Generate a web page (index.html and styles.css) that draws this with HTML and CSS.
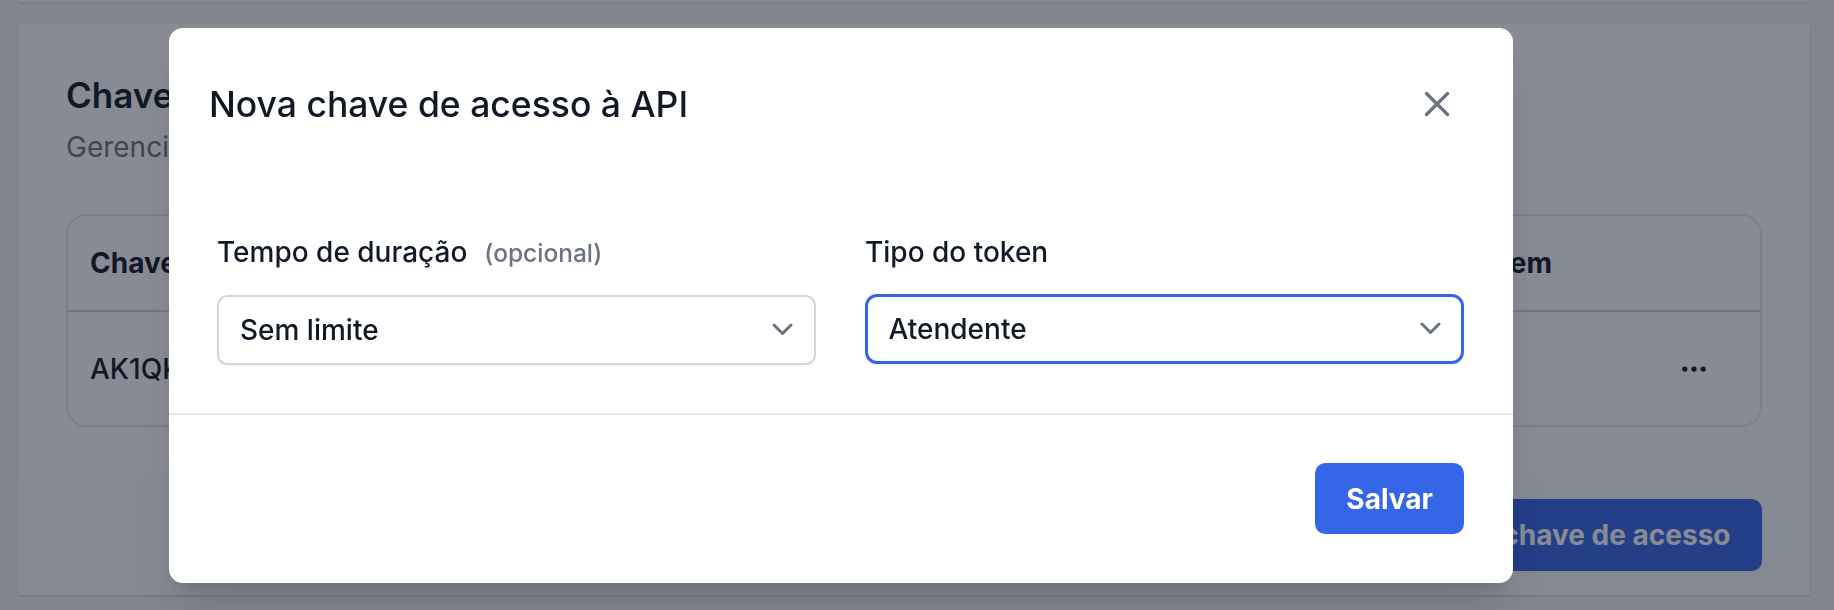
FILE: index.html
```html
<!DOCTYPE html>
<html lang="pt-BR">
<head>
<meta charset="utf-8">
<title>Nova chave de acesso à API</title>
<link rel="stylesheet" href="styles.css">
</head>
<body>
<div class="page">
  <div class="card card-prev"></div>
  <section class="card">
    <div class="card-body">
      <h2 class="card-title">Chaves</h2>
      <p class="card-sub">Gerencie suas chaves de acesso</p>
      <div class="table">
        <div class="tr th">
          <div class="cell cell-key">Chaves</div>
          <div class="cell cell-date">Criado em</div>
          <div class="cell cell-actions"></div>
        </div>
        <div class="tr td">
          <div class="cell cell-key">AK1QK7</div>
          <div class="cell cell-date"></div>
          <div class="cell cell-actions">
            <svg class="dots" viewBox="0 0 24 24" width="42" height="42" aria-hidden="true">
              <circle cx="6.75" cy="12" r="1.5"/>
              <circle cx="12" cy="12" r="1.5"/>
              <circle cx="17.25" cy="12" r="1.5"/>
            </svg>
          </div>
        </div>
      </div>
    </div>
    <div class="card-footer">
      <button class="btn btn-page" type="button">Nova chave de acesso</button>
    </div>
  </section>
</div>

<div class="overlay">
  <div class="modal" role="dialog" aria-modal="true">
    <div class="modal-header">
      <h3 class="modal-title">Nova chave de acesso à API</h3>
      <button class="close" type="button" aria-label="Fechar">
        <svg viewBox="0 0 24 24" width="42" height="42" aria-hidden="true">
          <path d="M6 18L18 6M6 6l12 12"/>
        </svg>
      </button>
    </div>
    <div class="modal-body">
      <div class="field">
        <div class="label">Tempo de duração<span class="optional">(opcional)</span></div>
        <div class="select">
          <span>Sem limite</span>
          <svg class="chev" viewBox="0 0 21 13" width="21" height="13" aria-hidden="true">
            <polyline points="2,2 10.5,10.5 19,2"/>
          </svg>
        </div>
      </div>
      <div class="field">
        <div class="label">Tipo do token</div>
        <div class="select select-focus">
          <span>Atendente</span>
          <svg class="chev" viewBox="0 0 21 13" width="21" height="13" aria-hidden="true">
            <polyline points="2,2 10.5,10.5 19,2"/>
          </svg>
        </div>
      </div>
    </div>
    <div class="modal-footer">
      <button class="btn btn-save" type="button">Salvar</button>
    </div>
  </div>
</div>
</body>
</html>
```

FILE: styles.css
```css
* { box-sizing: border-box; }

html, body {
  margin: 0;
  padding: 0;
}

body {
  width: 1834px;
  height: 610px;
  overflow: hidden;
  background: #f3f4f6;
  font-family: Inter, "Noto Sans", "Liberation Sans", sans-serif;
  color: #111827;
}

.page {
  display: flex;
  flex-direction: column;
  gap: 21px;
  padding: 0 24px 0 18px;
}

.card {
  background: #ffffff;
  box-shadow: 0 1px 3px rgba(0, 0, 0, 0.1), 0 1px 2px rgba(0, 0, 0, 0.06);
}

.card-prev {
  height: 2px;
}

.card-body {
  padding: 48px 48px 48px 48px;
}

.card-title {
  margin: 0;
  font-size: 35px;
  line-height: 49px;
  font-weight: 600;
  color: #111827;
}

.card-sub {
  margin: 9px 0 0 0;
  font-size: 28px;
  line-height: 36px;
  color: #6b7280;
}

.table {
  margin-top: 49px;
  border: 2px solid #e5e7eb;
  border-radius: 21px;
  overflow: hidden;
  box-shadow: 0 1px 2px rgba(0, 0, 0, 0.05);
}

.tr {
  display: grid;
  grid-template-columns: 1fr auto 208px;
  align-items: center;
  font-size: 28px;
  line-height: 42px;
}

.th {
  height: 96px;
  border-bottom: 2px solid #d1d5db;
  font-weight: 700;
}

.td {
  height: 113px;
  font-weight: 500;
}

.cell-key {
  padding-left: 22px;
}

.cell-actions {
  display: flex;
  justify-content: flex-end;
  padding-right: 45px;
}

.dots {
  display: block;
  fill: #111827;
}

.card-footer {
  display: flex;
  justify-content: flex-end;
  background: #f9fafb;
  padding: 24px 48px;
}

.btn {
  font-family: inherit;
  border: 0;
  color: #ffffff;
  background: #3566e8;
  font-size: 28px;
  line-height: 42px;
  font-weight: 700;
  border-radius: 10.5px;
  box-shadow: 0 1px 2px rgba(0, 0, 0, 0.05);
  cursor: pointer;
}

.btn-page {
  height: 72px;
  padding: 0 31.5px;
}

/* Overlay + modal */
.overlay {
  position: fixed;
  inset: 0;
  background: rgba(17, 24, 39, 0.5);
}

.modal {
  position: absolute;
  left: 169px;
  top: 28px;
  width: 1344px;
  background: #ffffff;
  border-radius: 14px;
  box-shadow: 0 35px 44px -9px rgba(0, 0, 0, 0.1), 0 14px 18px -10px rgba(0, 0, 0, 0.1);
}

.modal-header {
  display: flex;
  align-items: center;
  justify-content: space-between;
  padding: 51.5px 55px 0 40px;
}

.modal-title {
  margin: 0;
  font-size: 35.5px;
  line-height: 49px;
  font-weight: 500;
  color: #111827;
}

.close {
  display: block;
  width: 42px;
  height: 42px;
  padding: 0;
  border: 0;
  background: transparent;
  cursor: pointer;
}

.close svg {
  display: block;
  fill: none;
  stroke: #6b7280;
  stroke-width: 1.9;
  stroke-linecap: round;
  stroke-linejoin: round;
}

.modal-body {
  display: grid;
  grid-template-columns: 1fr 1fr;
  column-gap: 49px;
  padding: 102px 49px 48.5px 48px;
  border-bottom: 2px solid #e5e7eb;
}

.label {
  display: flex;
  align-items: baseline;
  font-size: 28px;
  line-height: 42px;
  font-weight: 500;
  color: #111827;
}

.optional {
  margin-left: 17px;
  font-size: 24.5px;
  font-weight: 500;
  color: #6b7280;
}

.select {
  margin-top: 21px;
  height: 70px;
  display: flex;
  align-items: center;
  justify-content: space-between;
  padding: 0 21px;
  border: 2px solid #d1d5db;
  border-radius: 10.5px;
  background: #ffffff;
  box-shadow: 0 1px 2px rgba(0, 0, 0, 0.05);
  font-size: 28px;
  line-height: 42px;
  font-weight: 500;
  color: #111827;
}

.select-focus {
  border: 3px solid #3566e8;
  border-radius: 12px;
  padding: 0 20px 0 20.5px;
}

.chev {
  display: block;
  fill: none;
  stroke: #6b7280;
  stroke-width: 3;
  stroke-linecap: round;
  stroke-linejoin: round;
}

.modal-footer {
  display: flex;
  justify-content: flex-end;
  padding: 48px 49px 49px 48px;
}

.btn-save {
  height: 71px;
  padding: 0 31px;
}
```
